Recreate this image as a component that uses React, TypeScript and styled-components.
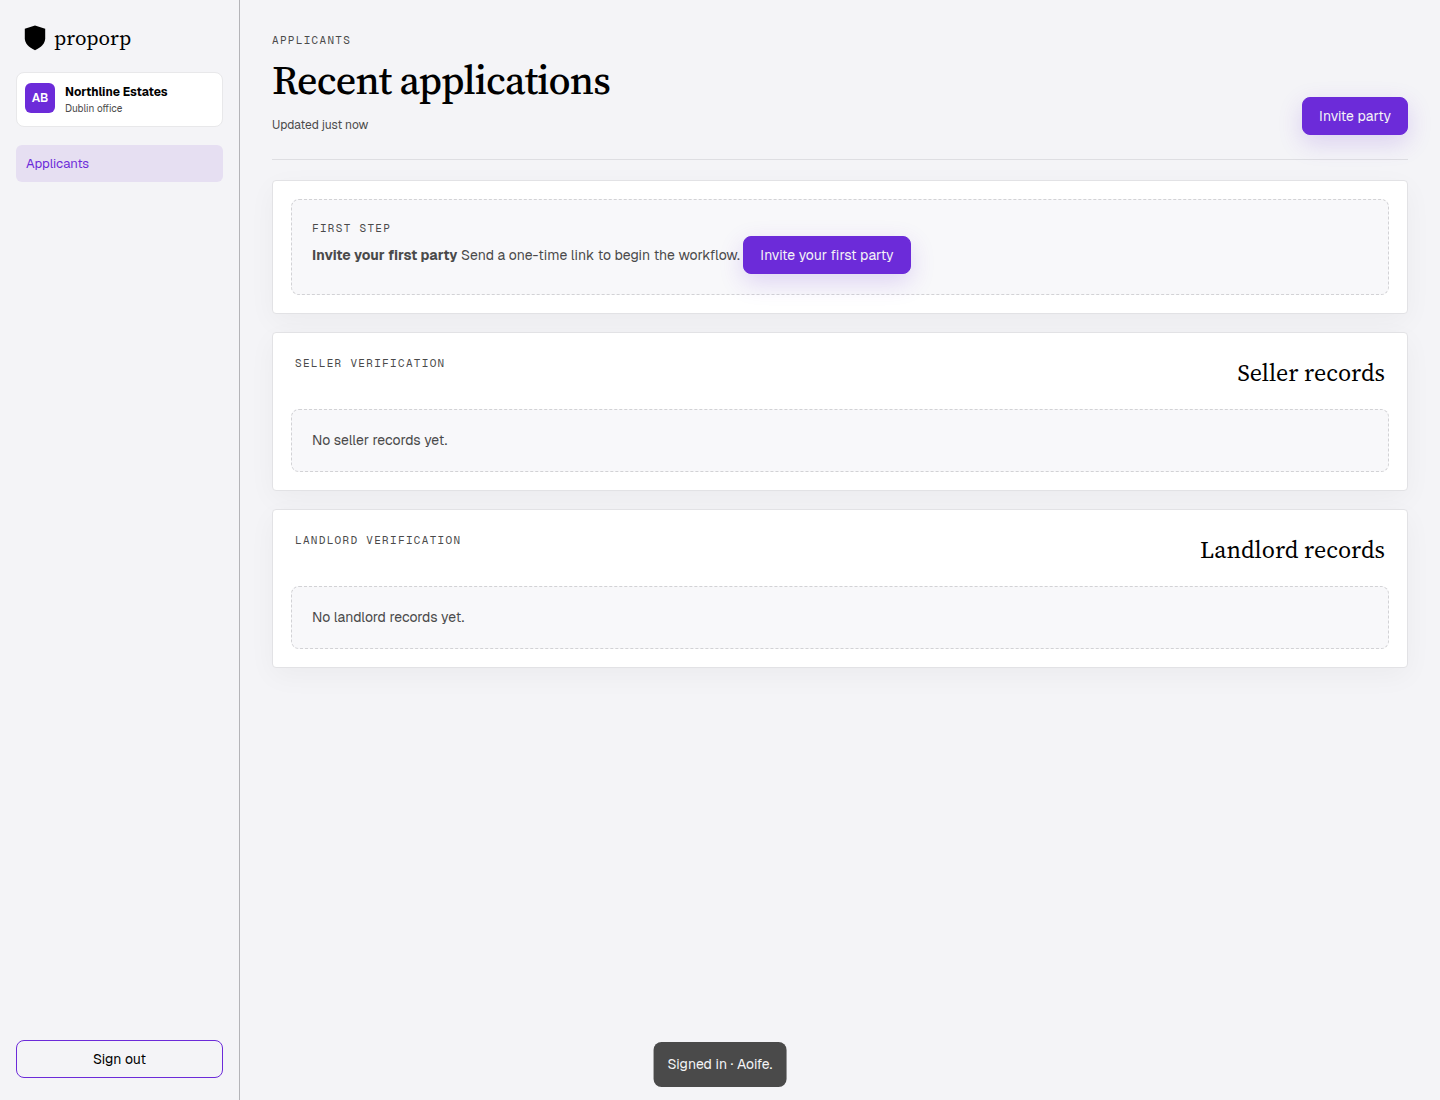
import React from "react";
import styled, { createGlobalStyle } from "styled-components";

const sans = `Geist, Inter, "Liberation Sans", sans-serif`;
const serif = `"Source Serif 4", "Liberation Serif", serif`;
const mono = `"Geist Mono", "Liberation Mono", monospace`;

const GlobalStyle = createGlobalStyle`
  *, *::before, *::after { box-sizing: border-box; }
  body {
    margin: 0;
    background: #f4f4f7;
    color: #000;
    font: 14px/21px ${sans};
    -webkit-font-smoothing: antialiased;
  }
  h1, h2, p { margin: 0; }
`;

const Shell = styled.div`
  display: grid;
  grid-template-columns: 240px minmax(0, 1fr);
  min-height: 100vh;
`;

const Sidebar = styled.aside`
  display: flex;
  flex-direction: column;
  gap: 18px;
  padding: 22px 16px;
  border-right: 1px solid #b4b4b8;
`;

const Brand = styled.a`
  display: flex;
  align-items: center;
  gap: 8px;
  height: 32px;
  padding: 0 8px;
  color: #000;
  font: 21px/32px ${serif};
  text-decoration: none;
`;

const Workspace = styled.div`
  display: flex;
  align-items: flex-start;
  gap: 10px;
  padding: 10px 8px;
  background: #fff;
  border: 1px solid #e8e8ea;
  border-radius: 8px;
`;

const Avatar = styled.span`
  display: grid;
  place-items: center;
  width: 30px;
  height: 30px;
  border-radius: 6px;
  background: #6c2bd9;
  color: #fff;
  font-size: 12px;
  font-weight: 600;
`;

const WorkspaceText = styled.div`
  display: flex;
  flex-direction: column;
`;

const WorkspaceName = styled.strong`
  font-size: 12px;
  line-height: 18px;
  font-weight: 700;
`;

const WorkspaceOffice = styled.span`
  color: #4a4a4a;
  font-size: 10px;
  line-height: 15px;
`;

const Nav = styled.nav`
  display: grid;
`;

const NavLink = styled.a`
  padding: 8px 10px;
  border-radius: 6px;
  background: #e6dff2;
  color: #6c2bd9;
  font-size: 13px;
  text-decoration: none;
`;

const Button = styled.button<{ $outline?: boolean }>`
  height: 38px;
  padding: 0 16px;
  border: 1px solid #6c2bd9;
  border-radius: 8px;
  background: ${(p) => (p.$outline ? "transparent" : "#6c2bd9")};
  color: ${(p) => (p.$outline ? "#000" : "#f4f4f6")};
  box-shadow: ${(p) => (p.$outline ? "none" : "0 8px 24px rgba(108, 43, 217, 0.18)")};
  font: 14px/20px ${sans};
  cursor: pointer;
`;

const SidebarFoot = styled.div`
  display: grid;
  margin-top: auto;
`;

const Main = styled.main`
  display: flex;
  flex-direction: column;
  gap: 18px;
  padding: 32px;
`;

const PageHeader = styled.header`
  display: flex;
  align-items: flex-end;
  justify-content: space-between;
  gap: 24px;
  margin-bottom: 2px;
  padding-bottom: 24px;
  border-bottom: 1px solid #dedee2;
`;

const Eyebrow = styled.p`
  color: #4a4a4a;
  font: 11px/16px ${mono};
  letter-spacing: 0.12em;
  text-transform: uppercase;
`;

const Title = styled.h1`
  margin: 8px 0 12px;
  font: 500 40px/48px ${serif};
  letter-spacing: -0.02em;
`;

const Updated = styled.p`
  color: #4a4a4a;
  font-size: 12px;
  line-height: 19px;
`;

const Card = styled.section`
  padding: 18px;
  background: #fff;
  border: 1px solid #e2e2e5;
  border-radius: 4px;
  box-shadow: 0 8px 28px rgba(0, 0, 0, 0.04);
`;

const CardHead = styled.div`
  display: flex;
  align-items: flex-start;
  justify-content: space-between;
  gap: 16px;
  padding: 4px 4px 18px;
`;

const CardTitle = styled.h2`
  font: 400 24px/36px ${serif};
`;

const Empty = styled.div`
  padding: 20px;
  border: 1px dashed #d2d2d5;
  border-radius: 8px;
  background: #f8f8fa;
  color: #4a4a4a;
`;

const Toast = styled.div`
  position: fixed;
  bottom: 13px;
  left: 50%;
  transform: translateX(-50%);
  padding: 12px 14px;
  border-radius: 8px;
  background: #4a4a4a;
  color: #f4f4f6;
  white-space: nowrap;
`;

function ShieldIcon() {
  return (
    <svg width="22" height="26" viewBox="0 0 22 26" aria-hidden="true">
      <path d="M11 .5 21.200 3.800v9.400c0 5-3.700 9-10.200 12C4.500 22.200.8 18.200.8 13.200V3.800Z" fill="#000" />
    </svg>
  );
}

function Records({ label, title, empty }: { label: string; title: string; empty: string }) {
  return (
    <Card>
      <CardHead>
        <Eyebrow>{label}</Eyebrow>
        <CardTitle>{title}</CardTitle>
      </CardHead>
      <Empty>{empty}</Empty>
    </Card>
  );
}

export default function App() {
  return (
    <>
      <GlobalStyle />
      <Shell>
        <Sidebar>
          <Brand href="#">
            <ShieldIcon />
            proporp
          </Brand>
          <Workspace>
            <Avatar>AB</Avatar>
            <WorkspaceText>
              <WorkspaceName>Northline Estates</WorkspaceName>
              <WorkspaceOffice>Dublin office</WorkspaceOffice>
            </WorkspaceText>
          </Workspace>
          <Nav>
            <NavLink href="#applicants" aria-current="page">Applicants</NavLink>
          </Nav>
          <SidebarFoot>
            <Button type="button" $outline>Sign out</Button>
          </SidebarFoot>
        </Sidebar>
        <Main>
          <PageHeader>
            <div>
              <Eyebrow>Applicants</Eyebrow>
              <Title>Recent applications</Title>
              <Updated>Updated just now</Updated>
            </div>
            <Button type="button">Invite party</Button>
          </PageHeader>
          <Card>
            <Empty>
              <Eyebrow>First step</Eyebrow>
              <strong>Invite your first party</strong> Send a one-time link to begin the workflow.{" "}
              <Button type="button">Invite your first party</Button>
            </Empty>
          </Card>
          <Records label="Seller verification" title="Seller records" empty="No seller records yet." />
          <Records label="Landlord verification" title="Landlord records" empty="No landlord records yet." />
        </Main>
      </Shell>
      <Toast role="status">Signed in · Aoife.</Toast>
    </>
  );
}
